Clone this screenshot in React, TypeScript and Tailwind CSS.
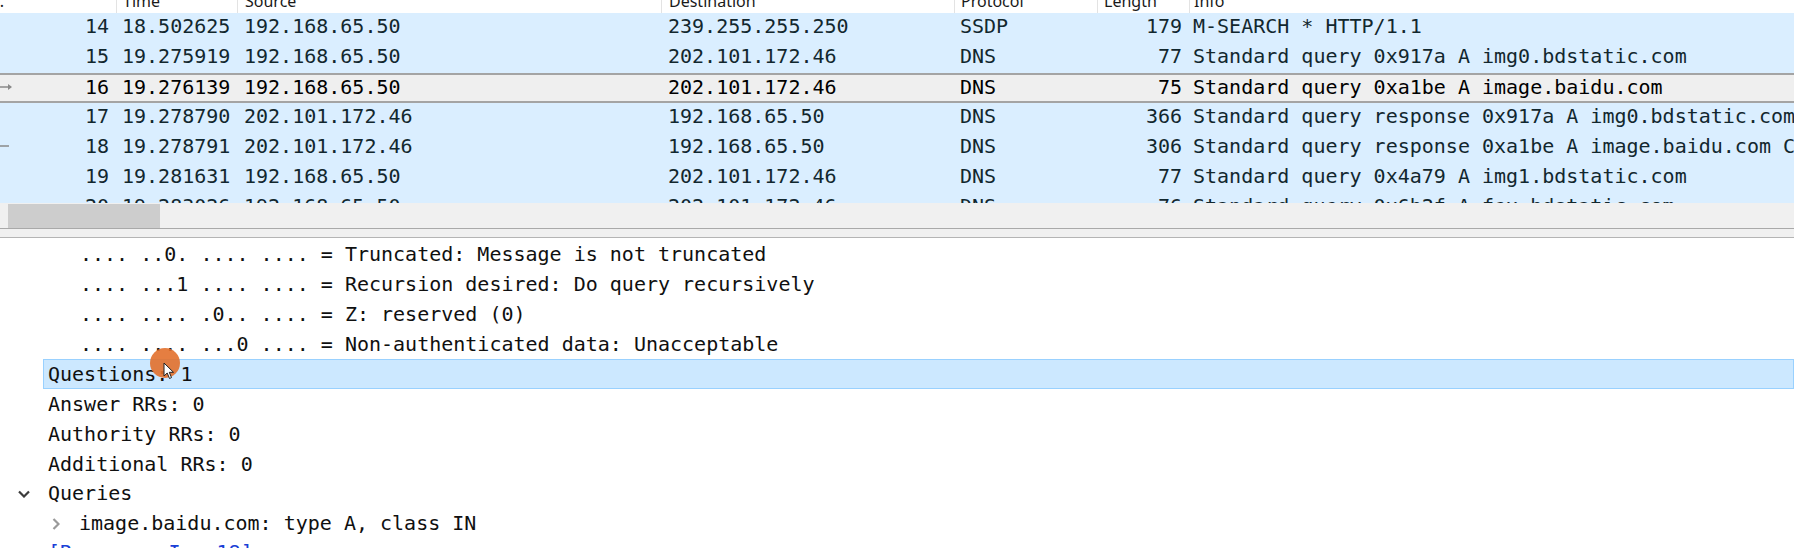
import React from 'react';

const cols = 'grid grid-cols-[116px_121px_424px_293px_143px_92px_1fr]';

const packets = [
  { no: 14, time: '18.502625', src: '192.168.65.50', dst: '239.255.255.250', proto: 'SSDP', len: 179, info: 'M-SEARCH * HTTP/1.1' },
  { no: 15, time: '19.275919', src: '192.168.65.50', dst: '202.101.172.46', proto: 'DNS', len: 77, info: 'Standard query 0x917a A img0.bdstatic.com' },
  { no: 16, time: '19.276139', src: '192.168.65.50', dst: '202.101.172.46', proto: 'DNS', len: 75, info: 'Standard query 0xa1be A image.baidu.com', selected: true, mark: 'arrow' },
  { no: 17, time: '19.278790', src: '202.101.172.46', dst: '192.168.65.50', proto: 'DNS', len: 366, info: 'Standard query response 0x917a A img0.bdstatic.com CNAME img0.bdstatic.com.a.bdydns.com' },
  { no: 18, time: '19.278791', src: '202.101.172.46', dst: '192.168.65.50', proto: 'DNS', len: 306, info: 'Standard query response 0xa1be A image.baidu.com CNAME image.n.shifen.com A', mark: 'dash' },
  { no: 19, time: '19.281631', src: '192.168.65.50', dst: '202.101.172.46', proto: 'DNS', len: 77, info: 'Standard query 0x4a79 A img1.bdstatic.com' },
  { no: 20, time: '19.283026', src: '192.168.65.50', dst: '202.101.172.46', proto: 'DNS', len: 76, info: 'Standard query 0x6b2f A fex.bdstatic.com' },
];

const Marker = ({ kind }: { kind?: string }) => {
  if (kind === 'arrow')
    return (
      <svg width="13" height="8" viewBox="0 0 13 8">
        <path d="M0 4H11" stroke="#8a8a8a" strokeWidth="1.5" />
        <path d="M8 1L12 4L8 7Z" fill="#8a8a8a" />
      </svg>
    );
  if (kind === 'dash')
    return (
      <svg width="10" height="4" viewBox="0 0 10 4">
        <path d="M0 2H9" stroke="#8a8a8a" strokeWidth="1.5" />
      </svg>
    );
  return <span />;
};

const PacketRow = ({ p }: { p: (typeof packets)[number] }) => (
  <div
    className={`${cols} h-[30px] items-start whitespace-nowrap ${
      p.selected
        ? 'bg-[#efefef] text-black border-y-2 border-[#a4a4a4] leading-[24px]'
        : 'bg-[#daeeff] text-[#12272e] leading-[26px]'
    }`}
  >
    <div className="flex items-center justify-between pr-[7px]">
      <Marker kind={p.mark} />
      <span>{p.no}</span>
    </div>
    <div className="pl-[6px]">{p.time}</div>
    <div className="pl-[7px]">{p.src}</div>
    <div className="pl-[7px]">{p.dst}</div>
    <div className="pl-[6px]">{p.proto}</div>
    <div className="pr-[7px] text-right">{p.len}</div>
    <div className="pl-[4px] overflow-hidden">{p.info}</div>
  </div>
);

const ChevronDown = () => (
  <svg width="12" height="8" viewBox="0 0 12 8">
    <path d="M1 1.5L6 6.5L11 1.5" fill="none" stroke="#3c3c3c" strokeWidth="2.2" />
  </svg>
);

const ChevronRight = () => (
  <svg width="8" height="12" viewBox="0 0 8 12">
    <path d="M1.5 1L6.5 6L1.5 11" fill="none" stroke="#9a9a9a" strokeWidth="2.2" />
  </svg>
);

const flagLines = [
  '.... ..0. .... .... = Truncated: Message is not truncated',
  '.... ...1 .... .... = Recursion desired: Do query recursively',
  '.... .... .0.. .... = Z: reserved (0)',
  '.... .... ...0 .... = Non-authenticated data: Unacceptable',
];

export default function App() {
  return (
    <div className="w-[1794px] h-[548px] overflow-hidden bg-white font-['DejaVu_Sans_Mono','Liberation_Mono',monospace] text-[20px] leading-[30px]">
      {/* column header, only its lower edge is in view */}
      <div className="h-[13px] overflow-hidden bg-white">
        <div className={`${cols} -mt-[11px] h-[24px] font-['Noto_Sans',sans-serif] text-[16px] leading-[24px] text-[#1a1a1a]`}>
          <div><span className="-ml-[22px]">No.</span></div>
          <div className="border-l border-[#e3e3e3] pl-[6px]">Time</div>
          <div className="border-l border-[#e3e3e3] pl-[7px]">Source</div>
          <div className="border-l border-[#e3e3e3] pl-[7px]">Destination</div>
          <div className="border-l border-[#e3e3e3] pl-[6px]">Protocol</div>
          <div className="border-l border-[#e3e3e3] pl-[6px]">Length</div>
          <div className="border-l border-[#e3e3e3] pl-[4px]">Info</div>
        </div>
      </div>

      {/* packet list */}
      <div className="h-[190px] overflow-hidden">
        {packets.map((p) => (
          <PacketRow key={p.no} p={p} />
        ))}
      </div>

      {/* horizontal scrollbar */}
      <div className="h-[26px] bg-[#f0f0f0] pl-[8px] pt-[1px] border-b border-[#a9a9a9]">
        <div className="w-[152px] h-[24px] bg-[#cdcdcd]" />
      </div>
      <div className="h-[9px] bg-[#f0f0f0] border-b border-[#b4b4b4]" />

      {/* packet details */}
      <div className="relative pt-[1px] text-[#101010]">
        {flagLines.map((t) => (
          <div key={t} className="h-[30px] pl-[80px] whitespace-pre">{t}</div>
        ))}
        <div className="h-[30px] ml-[43px] pl-[4px] bg-[#cce8ff] border border-[#99d1ff] leading-[28px]">Questions: 1</div>
        <div className="h-[30px] pl-[48px]">Answer RRs: 0</div>
        <div className="h-[30px] pl-[48px]">Authority RRs: 0</div>
        <div className="h-[30px] pl-[48px]">Additional RRs: 0</div>
        <div className="h-[30px] flex items-center">
          <div className="w-[48px] flex justify-start pl-[18px]"><ChevronDown /></div>
          <span className="-mt-[2px]">Queries</span>
        </div>
        <div className="h-[30px] flex items-center">
          <div className="w-[79px] flex justify-start pl-[52px]"><ChevronRight /></div>
          <span className="-mt-[2px]">image.baidu.com: type A, class IN</span>
        </div>
        <div className="h-[30px] pl-[48px] -mt-[2px] text-[#1a3fd6]">[Response In: 18]</div>

        {/* screen-recording cursor highlight */}
        <div className="absolute left-[150px] top-[110px] w-[30px] h-[30px] rounded-full bg-[#e2702c]/90" />
        <svg className="absolute left-[163px] top-[124px]" width="12" height="18" viewBox="0 0 12 18">
          <path d="M1 1V14L4.2 11L6.5 16.5L8.5 15.6L6.3 10.3H10.5Z" fill="#ffffff" stroke="#222" strokeWidth="1" />
        </svg>
      </div>
    </div>
  );
}
